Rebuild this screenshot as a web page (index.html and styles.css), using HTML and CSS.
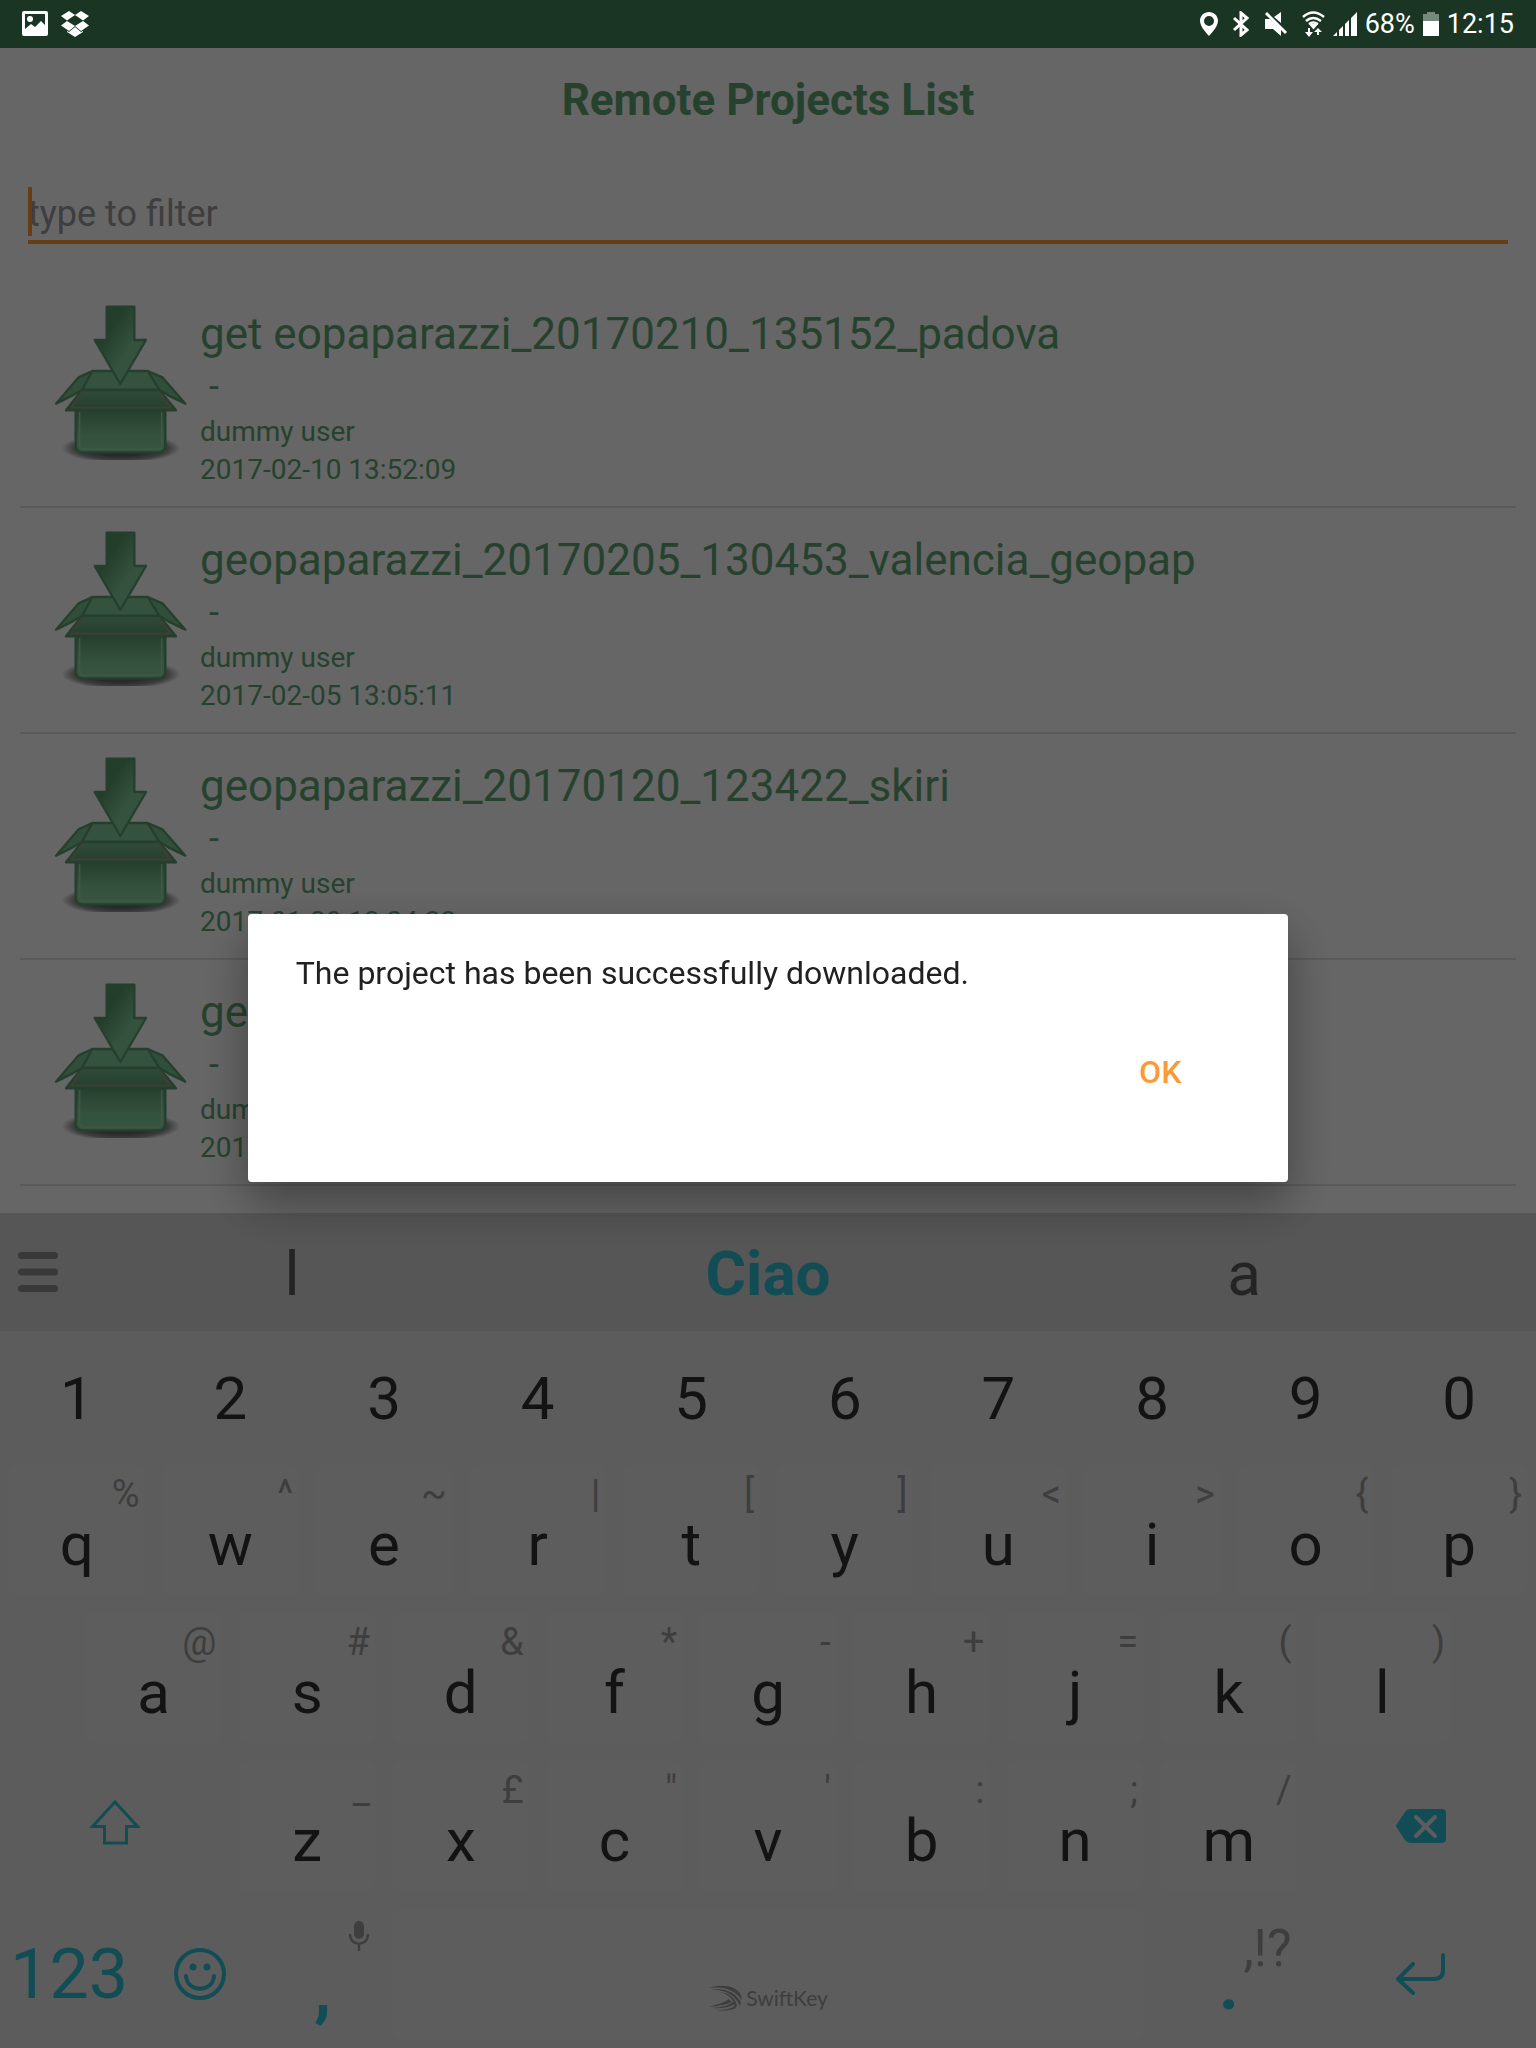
FILE: index.html
```html
<!DOCTYPE html>
<html lang="en">
<head>
<meta charset="utf-8">
<meta name="viewport" content="width=device-width, initial-scale=1">
<title>Remote Projects List</title>
<link rel="stylesheet" href="styles.css">
</head>
<body>
<svg class="sprite" aria-hidden="true">
  <defs>
    <linearGradient id="arrow-fill" x1="0" y1="0" x2="1" y2="1">
      <stop offset="0.3" stop-color="#5b9b6e"/><stop offset="0.6" stop-color="#82cc99"/>
    </linearGradient>
    <linearGradient id="box-fill" x1="0" y1="0" x2="0" y2="1">
      <stop offset="0" stop-color="#5f9f72"/><stop offset="0.6" stop-color="#84cc9a"/><stop offset="1" stop-color="#88d29f"/>
    </linearGradient>
    <linearGradient id="inner-fill" x1="0" y1="0" x2="0" y2="1">
      <stop offset="0" stop-color="#79bd8e"/><stop offset="1" stop-color="#5c9b70"/>
    </linearGradient>
    <radialGradient id="box-shadow">
      <stop offset="0.5" stop-color="#000" stop-opacity="0.6"/><stop offset="0.8" stop-color="#000" stop-opacity="0.4"/><stop offset="1" stop-color="#000" stop-opacity="0"/>
    </radialGradient>
    <symbol id="download-box" viewBox="60 60 420 480">
      <ellipse cx="273" cy="505" rx="178" ry="44" fill="url(#box-shadow)"/>
      <g stroke="#5b9d70" stroke-width="7" stroke-linejoin="round">
        <path d="M187 273 L146 292 L78 371 L128 346 L160 328Z" fill="#7cc492"/>
        <path d="M353 273 L397 292 L466 371 L415 346 L386 328Z" fill="#7cc492"/>
        <path d="M187 273 H353 L388 330 H156Z" fill="#82cc99"/>
        <path d="M137 390 H406 V495 Q406 517 386 517 H157 Q137 517 137 495Z" fill="url(#box-fill)"/>
        <path d="M156 330 H388 L438 391 H108Z" fill="url(#inner-fill)"/>
      </g>
      <path d="M156 334 L124 383 H422 L386 334" fill="none" stroke="#a69a86" stroke-width="5"/>
      <path d="M149 396 V494 Q149 507 162 507 H382 Q395 507 395 494 V396" fill="none" stroke="#9fdcb2" stroke-width="4"/>
      <path d="M230 80 H313 V180 H348 L271 312 L194 180 H230Z" fill="url(#arrow-fill)" stroke="#5b9d70" stroke-width="7" stroke-linejoin="round"/>
    </symbol>
  </defs>
</svg>

<header class="status">
  <div class="status-group">
    <svg width="26" height="26" viewBox="0 0 26 26" fill="#fff"><path fill-rule="evenodd" d="M2 0H24Q26 0 26 2V23Q26 25 24 25H2Q0 25 0 23V2Q0 0 2 0ZM3 3V18L9 13L13 16L19 10L23 14V3Z"/><circle cx="8" cy="8" r="3"/></svg>
    <svg width="28" height="26" viewBox="0 0 28 26" fill="#fff"><path d="M8 0L14 4L6 9.500L0 5ZM20 0L14 4L22 9.500L28 5ZM6 10L0 14.500L8 20L14 15ZM22 10L28 14.500L20 20L14 15ZM14 16L20 21L22 20V21L14 26L6 21V20L8 21Z"/></svg>
  </div>
  <div class="status-group status-right">
    <svg width="24" height="26" viewBox="0 0 24 26"><path fill="#fff" fill-rule="evenodd" d="M12 1C7 1 3 4.800 3 10C3 16 12 25 12 25S21 16 21 10C21 4.800 17 1 12 1ZM12 5A5 5 0 1 1 12 15A5 5 0 1 1 12 5Z"/></svg>
    <svg width="24" height="26" viewBox="0 0 24 26"><path d="M5 7L18 19L12 24V2L18 7L5 19" fill="none" stroke="#fff" stroke-width="3"/></svg>
    <svg width="32" height="26" viewBox="0 0 32 26" fill="#fff"><path d="M4 8H9L20 18V25L12 18H4ZM13 6L20 1V12Z"/><path d="M5 2L25 22" stroke="#fff" stroke-width="3"/></svg>
    <svg width="24" height="26" viewBox="0 0 24 26" fill="none" stroke="#fff" stroke-width="2.500"><path d="M2 6Q12 -3 23 6M5 10Q12 4 20 10M8 13Q12 10 17 13"/><path d="M10 14H15L12.500 17ZM8 17V22M17 24V20" fill="#fff" stroke-width="2"/><path d="M4 21H12L8 26ZM13 21H21L17 17Z" fill="#fff" stroke="none"/></svg>
    <svg width="24" height="26" viewBox="0 0 24 26" fill="#fff"><path d="M0 25L4 21V25ZM6 19L10 15V25H6ZM12 13L16 9V25H12ZM18 7L24 1V25H18Z"/></svg>
    <span>68%</span>
    <svg width="16" height="26" viewBox="0 0 16 26"><path d="M0 3H4V1H12V3H16V10H0Z" fill="#768a7c"/><path d="M0 10H16V25H0Z" fill="#fff"/></svg>
    <span>12:15</span>
  </div>
</header>

<main class="screen">
  <h1 class="title">Remote Projects List</h1>
  <div class="filter">
    <input class="filter-input" type="text" placeholder="type to filter" aria-label="type to filter">
    <span class="caret"></span>
  </div>
  <ul class="projects">
    <li class="project">
      <svg class="project-icon"><use href="#download-box"/></svg>
      <div class="project-text">
        <p class="project-name">get eopaparazzi_20170210_135152_padova</p>
        <p class="project-desc"> -</p>
        <p class="project-meta">dummy user</p>
        <p class="project-meta">2017-02-10 13:52:09</p>
      </div>
    </li>
    <li class="project">
      <svg class="project-icon"><use href="#download-box"/></svg>
      <div class="project-text">
        <p class="project-name">geopaparazzi_20170205_130453_valencia_geopap</p>
        <p class="project-desc"> -</p>
        <p class="project-meta">dummy user</p>
        <p class="project-meta">2017-02-05 13:05:11</p>
      </div>
    </li>
    <li class="project">
      <svg class="project-icon"><use href="#download-box"/></svg>
      <div class="project-text">
        <p class="project-name">geopaparazzi_20170120_123422_skiri</p>
        <p class="project-desc"> -</p>
        <p class="project-meta">dummy user</p>
        <p class="project-meta">2017-01-20 12:34:22</p>
      </div>
    </li>
    <li class="project">
      <svg class="project-icon"><use href="#download-box"/></svg>
      <div class="project-text">
        <p class="project-name">geopaparazzi</p>
        <p class="project-desc"> -</p>
        <p class="project-meta">dummy user</p>
        <p class="project-meta">2017</p>
      </div>
    </li>
  </ul>
</main>

<section class="keyboard" aria-label="Keyboard">
  <div class="suggestions">
    <button class="menu" aria-label="Menu"><svg width="40" height="40" viewBox="0 0 40 40" stroke="#8f8f8f" stroke-width="7" stroke-linecap="round"><path d="M3.500 3.500H36.500M3.500 20H36.500M3.500 36.500H36.500"/></svg></button>
    <button class="suggestion">l</button>
    <button class="suggestion suggestion-main">Ciao</button>
    <button class="suggestion">a</button>
  </div>
  <div class="row row-digits">
    <button class="digit">1</button><button class="digit">2</button><button class="digit">3</button><button class="digit">4</button><button class="digit">5</button><button class="digit">6</button><button class="digit">7</button><button class="digit">8</button><button class="digit">9</button><button class="digit">0</button>
  </div>
  <div class="row">
    <button class="key"><span class="hint">%</span><span class="letter">q</span></button>
    <button class="key"><span class="hint">^</span><span class="letter">w</span></button>
    <button class="key"><span class="hint">~</span><span class="letter">e</span></button>
    <button class="key"><span class="hint">|</span><span class="letter">r</span></button>
    <button class="key"><span class="hint">[</span><span class="letter">t</span></button>
    <button class="key"><span class="hint">]</span><span class="letter">y</span></button>
    <button class="key"><span class="hint">&lt;</span><span class="letter">u</span></button>
    <button class="key"><span class="hint">&gt;</span><span class="letter">i</span></button>
    <button class="key"><span class="hint">{</span><span class="letter">o</span></button>
    <button class="key"><span class="hint">}</span><span class="letter">p</span></button>
  </div>
  <div class="row row-home">
    <button class="key"><span class="hint">@</span><span class="letter">a</span></button>
    <button class="key"><span class="hint">#</span><span class="letter">s</span></button>
    <button class="key"><span class="hint">&amp;</span><span class="letter">d</span></button>
    <button class="key"><span class="hint">*</span><span class="letter">f</span></button>
    <button class="key"><span class="hint">-</span><span class="letter">g</span></button>
    <button class="key"><span class="hint">+</span><span class="letter">h</span></button>
    <button class="key"><span class="hint">=</span><span class="letter">j</span></button>
    <button class="key"><span class="hint">(</span><span class="letter">k</span></button>
    <button class="key"><span class="hint">)</span><span class="letter">l</span></button>
  </div>
  <div class="row row-shift">
    <button class="key key-plain key-shift" aria-label="Shift"><svg width="52" height="45" viewBox="0 0 52 45" fill="none" stroke="#2dbed4" stroke-width="3"><path d="M26 2L48.500 26.500H37.500V43H15.500V26.500H3.500Z"/></svg></button>
    <button class="key"><span class="hint">_</span><span class="letter">z</span></button>
    <button class="key"><span class="hint">£</span><span class="letter">x</span></button>
    <button class="key"><span class="hint">"</span><span class="letter">c</span></button>
    <button class="key"><span class="hint">'</span><span class="letter">v</span></button>
    <button class="key"><span class="hint">:</span><span class="letter">b</span></button>
    <button class="key"><span class="hint">;</span><span class="letter">n</span></button>
    <button class="key"><span class="hint">/</span><span class="letter">m</span></button>
    <button class="key key-plain" aria-label="Backspace"><svg width="50" height="34" viewBox="0 0 50 34"><path d="M14 0H46Q50 0 50 4V30Q50 34 46 34H14Q11 34 9 31L1 19Q-1 17 1 15L9 3Q11 0 14 0Z" fill="#2dbed4"/><path d="M20 8L39 27M39 8L20 27" stroke="#e6e6e6" stroke-width="4" stroke-linecap="round"/></svg></button>
  </div>
  <div class="row row-bottom">
    <button class="key key-plain key-123">123</button>
    <button class="key key-plain" aria-label="Emoji"><svg width="52" height="52" viewBox="0 0 52 52" fill="none" stroke="#2dbed4" stroke-width="4"><circle cx="26" cy="26" r="24"/><path d="M12 28C13 45 39 45 40 28" stroke-linecap="round"/><g fill="#2dbed4" stroke="none"><circle cx="19" cy="19" r="3.500"/><circle cx="33" cy="19" r="3.500"/></g></svg></button>
    <button class="key key-flat" aria-label="Comma"><svg class="hint" width="22" height="38" viewBox="0 0 22 38"><rect x="6" y="2" width="10" height="18" rx="5" fill="#9b9b9b"/><path d="M2 15C2 28 20 28 20 15M11 25V32" fill="none" stroke="#9b9b9b" stroke-width="2.500"/></svg><span class="letter letter-accent">,</span></button>
    <button class="key key-space" aria-label="Space">
      <svg width="34" height="26" viewBox="0 0 34 26" fill="#9b9b9b"><path d="M1 3C14 -1 28 0 33 10L34 15C26 4 15 1 1 3Z"/><path d="M3 5C17 2 29 8 33 18L32 21C27 9 16 4 3 5Z"/><path d="M10 7C20 7 28 13 29 21L27 23C26 14 20 8 10 7Z"/><path d="M21 14L24 17C17 20 9 21 1 22C9 19 16 18 21 14ZM25 17L27 19C20 23 12 24 5 23C13 22 20 21 25 17ZM27 21L28 23C22 26 14 26 9 25C16 25 22 24 27 21Z"/></svg>
      <span>SwiftKey</span>
    </button>
    <button class="key key-flat key-stop"><span class="hint">,!?</span><span class="letter letter-accent">.</span></button>
    <button class="key key-plain" aria-label="Enter"><svg width="50" height="42" viewBox="0 0 50 42" fill="none" stroke="#2dbed4" stroke-width="4" stroke-linecap="round" stroke-linejoin="round"><path d="M47 2V17Q47 26 38 26H3M17 11L2 26L17 40"/></svg></button>
  </div>
</section>

<div class="overlay">
  <div class="dialog" role="alertdialog" aria-label="Download finished">
    <p class="dialog-text">The project has been successfully downloaded.</p>
    <div class="dialog-actions"><button class="dialog-button">OK</button></div>
  </div>
</div>
</body>
</html>
```
FILE: styles.css
```css
* {
  box-sizing: border-box;
}

body {
  margin: 0;
  min-height: 100vh;
  display: flex;
  flex-direction: column;
  background: #fff;
  color: #5fa575;
  font-family: Roboto, "Liberation Sans", sans-serif;
}

p, ul, h1 {
  margin: 0;
  padding: 0;
}

button {
  margin: 0;
  padding: 0;
  border: 0;
  background: none;
  font: inherit;
  color: inherit;
}

svg {
  display: block;
  flex: none;
}

.sprite {
  position: absolute;
  width: 0;
  height: 0;
}

/* Status bar */
.status {
  height: 48px;
  padding: 0 22px;
  display: flex;
  align-items: center;
  justify-content: space-between;
  background: #1a3523;
  color: #fff;
  font-size: 27px;
}

.status-group {
  display: flex;
  align-items: center;
  gap: 13px;
}

.status-right {
  gap: 8px;
}

/* Project list */
.screen {
  flex: 1;
}

.title {
  font-size: 44px;
  line-height: 104px;
  text-align: center;
}

.filter {
  position: relative;
  margin: 32px 28px 38px;
}

.filter-input {
  display: block;
  width: 100%;
  height: 60px;
  padding: 4px 0 0;
  border: 0;
  border-bottom: 4px solid #ff9933;
  background: none;
  outline: 0;
  font: inherit;
  font-size: 36px;
}

.filter-input::placeholder {
  color: #9b9b9b;
  opacity: 1;
}

.caret {
  position: absolute;
  left: 0;
  top: 3px;
  width: 4px;
  height: 49px;
  background: #ff9933;
}

.projects {
  margin: 0 20px;
  list-style: none;
}

.project {
  display: flex;
  gap: 10px;
  padding: 18px 0 17px 30px;
  border-bottom: 2px solid #e0e0e0;
}

.project-icon {
  width: 140px;
  height: 160px;
}

.project-text {
  padding-top: 7px;
}

.project-name {
  font-size: 44px;
  line-height: 54px;
}

.project-desc {
  font-size: 36px;
  line-height: 52px;
  white-space: pre;
}

.project-meta {
  font-size: 28px;
  line-height: 38px;
}

/* Keyboard */
.keyboard {
  background: #e6e6e6;
  color: #303030;
}

.suggestions {
  display: grid;
  grid-template-columns: 54px 1fr 1fr 1fr 54px;
  height: 118px;
  background: #d6d6d6;
}

.menu {
  display: flex;
  align-items: center;
  padding-left: 18px;
}

.suggestion {
  padding-top: 2px;
  font-size: 62px;
  color: #5a5a5a;
}

.suggestion-main {
  font-weight: 700;
  color: #2dbed4;
}

.row {
  display: grid;
  grid-template-columns: repeat(10, 1fr);
  height: 148px;
}

.row-digits {
  height: 125px;
  padding-top: 10px;
}

.row-home {
  grid-template-columns: repeat(9, 1fr);
  padding: 0 5%;
}

.row-shift {
  grid-template-columns: 15fr repeat(7, 10fr) 15fr;
}

.row-bottom {
  grid-template-columns: 9fr 8fr 8fr 50fr 10fr 15fr;
}

.digit {
  font-size: 60px;
}

.key {
  margin: 9px;
  padding-top: 10px;
  display: flex;
  flex-direction: column;
  align-items: center;
  border-radius: 8px;
  background: #e9e9e9;
}

.key-plain,
.key-flat {
  background: none;
}

.key-plain {
  padding: 0;
  justify-content: center;
  color: #2dbed4;
}

.key-shift {
  padding-bottom: 8px;
}

.key-123 {
  font-size: 70px;
}

.hint {
  align-self: flex-end;
  margin-right: 5px;
  font-size: 38px;
  line-height: 38px;
  color: #9b9b9b;
}

.letter {
  font-size: 60px;
  line-height: 64px;
}

.letter-accent {
  font-size: 70px;
  font-weight: 700;
  color: #2dbed4;
}

.key-stop .hint {
  font-size: 52px;
  line-height: 60px;
}

.key-stop .letter {
  line-height: 12px;
}

.key-space {
  flex-direction: row;
  justify-content: center;
  align-items: flex-end;
  gap: 4px;
  padding-bottom: 28px;
  color: #9b9b9b;
  font-family: Lato, "Open Sans", sans-serif;
  font-size: 21px;
  line-height: 26px;
}

/* Dialog */
.overlay {
  position: fixed;
  inset: 48px 0 0;
  display: grid;
  place-items: center;
  background: rgba(0, 0, 0, 0.6);
}

.dialog {
  width: calc(68% - 4px);
  padding: 40px 88px 74px 48px;
  border-radius: 4px;
  background: #fff;
  box-shadow: 0 20px 48px rgba(0, 0, 0, 0.36);
}

.dialog-text {
  font-size: 32px;
  line-height: 38px;
  color: #212121;
}

.dialog-actions {
  display: flex;
  justify-content: flex-end;
  margin-top: 44px;
}

.dialog-button {
  min-width: 80px;
  height: 72px;
  font-size: 32px;
  font-weight: 500;
  color: #ff9933;
}
```
